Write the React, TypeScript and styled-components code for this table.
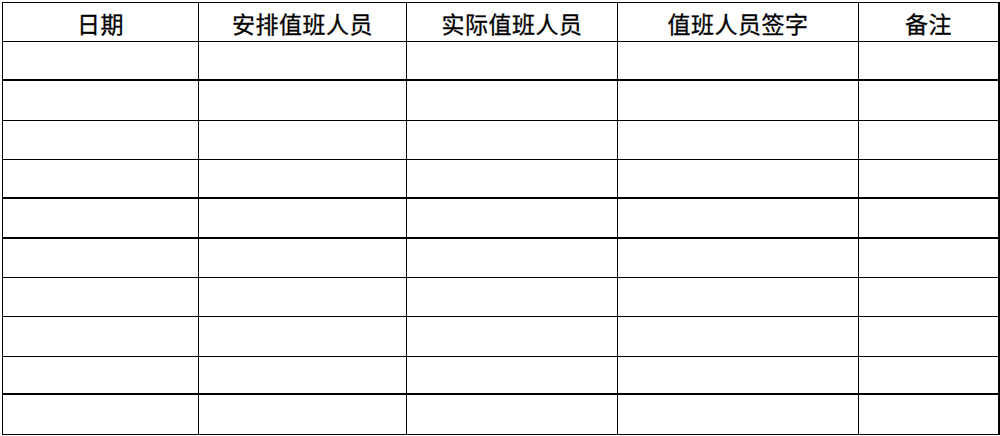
import React from 'react';
import styled, { createGlobalStyle } from 'styled-components';

const GlobalStyle = createGlobalStyle`
  html, body {
    margin: 0;
    padding: 0;
    background: #ffffff;
  }
  body {
    font-family: "Noto Sans CJK SC", "Noto Sans", sans-serif;
    color: #000;
  }
`;

const columns = ['日期', '安排值班人员', '实际值班人员', '值班人员签字', '备注'];

// row heights include the bottom border line, measured from the sheet
const rows = [
  { h: 39, thick: true },
  { h: 40, thick: false },
  { h: 39, thick: false },
  { h: 39, thick: true },
  { h: 40, thick: true },
  { h: 39, thick: false },
  { h: 39, thick: false },
  { h: 40, thick: false },
  { h: 38, thick: true },
  { h: 40, thick: false },
];

const Sheet = styled.div`
  margin: 2px 0 0 2px;
  width: 997px;
  display: grid;
  grid-template-columns: 196px 208px 211px 241px 141px;
  grid-auto-rows: auto;
  border-top: 1px solid #000;
  border-left: 1px solid #000;
`;

const HeadCell = styled.div<{ $last?: boolean }>`
  box-sizing: border-box;
  height: 39px;
  display: flex;
  align-items: center;
  justify-content: center;
  padding-top: 3px;
  font-size: 23px;
  font-weight: 400;
  line-height: 1;
  letter-spacing: 0.5px;
  color: #000;
  -webkit-text-stroke: 0.3px #000;
  border-bottom: 1px solid #000;
  border-right: ${(p) => (p.$last ? '2px' : '1px')} solid #000;
`;

const Cell = styled.div<{ $h: number; $thick: boolean; $last?: boolean }>`
  box-sizing: border-box;
  height: ${(p) => p.$h}px;
  border-bottom: ${(p) => (p.$thick ? '2px' : '1px')} solid #000;
  border-right: ${(p) => (p.$last ? '2px' : '1px')} solid #000;
`;

export default function App() {
  return (
    <>
      <GlobalStyle />
      <Sheet>
        {columns.map((c, i) => (
          <HeadCell key={c} $last={i === columns.length - 1}>
            {c}
          </HeadCell>
        ))}
        {rows.map((r, ri) =>
          columns.map((c, ci) => (
            <Cell
              key={`${ri}-${c}`}
              $h={r.h}
              $thick={r.thick}
              $last={ci === columns.length - 1}
            />
          ))
        )}
      </Sheet>
    </>
  );
}
